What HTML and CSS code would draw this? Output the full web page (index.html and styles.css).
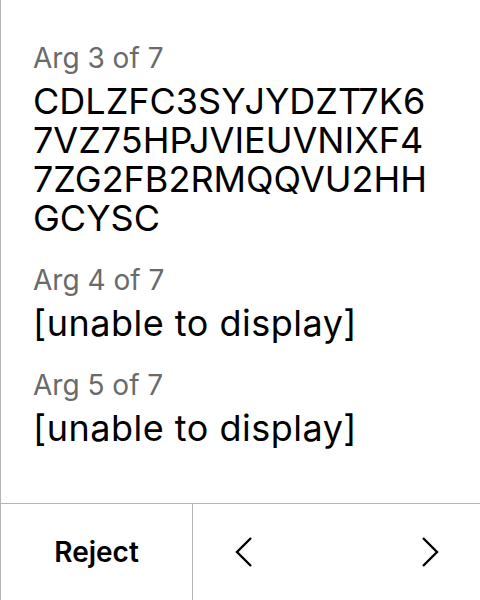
FILE: index.html
```html
<!DOCTYPE html>
<html>
<head>
<meta charset="utf-8">
<link rel="stylesheet" href="styles.css">
</head>
<body>
<div class="screen">
  <div class="content">
    <div class="arg">
      <div class="label">Arg 3 of 7</div>
      <div class="value">CDLZFC3SYJYDZT7K6<br>7VZ75HPJVIEUVNIXF4<br>7ZG2FB2RMQQVU2HH<br>GCYSC</div>
    </div>
    <div class="arg">
      <div class="label">Arg 4 of 7</div>
      <div class="value placeholder">[unable to display]</div>
    </div>
    <div class="arg">
      <div class="label">Arg 5 of 7</div>
      <div class="value placeholder">[unable to display]</div>
    </div>
  </div>
  <div class="footer">
    <div class="reject">Reject</div>
    <div class="nav">
      <svg class="chev" width="20" height="32" viewBox="0 0 20 32"><path d="M17 2 L3 16 L17 30" fill="none" stroke="#000" stroke-width="2.4"/></svg>
      <svg class="chev" width="20" height="32" viewBox="0 0 20 32"><path d="M3 2 L17 16 L3 30" fill="none" stroke="#000" stroke-width="2.4"/></svg>
    </div>
  </div>
</div>
</body>
</html>
```
FILE: styles.css
```css
html, body {
  margin: 0;
  padding: 0;
  background: #fff;
}
body {
  font-family: Inter, "Noto Sans", sans-serif;
  color: #000;
}
.screen {
  width: 480px;
  height: 600px;
  box-sizing: border-box;
  border-left: 1px solid #b4b4b4;
  display: flex;
  flex-direction: column;
}
.content {
  flex: 1;
  padding: 42px 10px 0 32px;
  display: flex;
  flex-direction: column;
  gap: 26px;
}
.arg {
  display: flex;
  flex-direction: column;
  gap: 8px;
}
.label {
  font-size: 28px;
  line-height: 32px;
  color: #6a6a6a;
}
.value {
  font-size: 36px;
  line-height: 39px;
}
.value.placeholder {
  letter-spacing: 0.5px;
}
.footer {
  height: 96px;
  border-top: 1px solid #b4b4b4;
  display: flex;
}
.reject {
  width: 191px;
  border-right: 1px solid #b4b4b4;
  display: flex;
  align-items: center;
  justify-content: center;
  font-size: 28px;
  font-weight: 600;
}
.nav {
  flex: 1;
  display: flex;
  align-items: center;
  justify-content: space-between;
  padding: 0 40px 0 41px;
}
.chev {
  display: block;
}
```
